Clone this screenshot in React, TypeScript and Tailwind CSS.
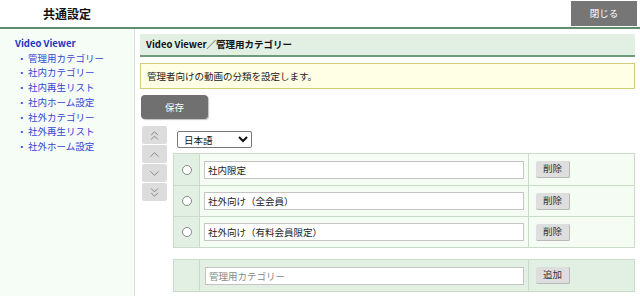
import { ChevronUp, ChevronDown, ChevronsUp, ChevronsDown } from 'lucide-react'

const navItems = [
  '管理用カテゴリー',
  '社内カテゴリー',
  '社内再生リスト',
  '社内ホーム設定',
  '社外カテゴリー',
  '社外再生リスト',
  '社外ホーム設定',
]

const categories = ['社内限定', '社外向け（全会員）', '社外向け（有料会員限定）']

function Radio() {
  return <span className="block h-[10px] w-[10px] rounded-full border border-[#8a8a8a] bg-white" />
}

function SmallButton({ label }: { label: string }) {
  return (
    <button className="h-[17px] w-[34px] rounded-[2px] border-b border-r border-[#b8b8b8] bg-[#dedede] text-[9.5px] leading-none text-[#333]">
      {label}
    </button>
  )
}

export default function App() {
  return (
    <div
      className="flex h-[296px] w-[640px] flex-col overflow-hidden bg-white text-[9.5px] text-[#222]"
      style={{ fontFamily: '"Noto Sans CJK JP", "Noto Sans", sans-serif' }}
    >
      <header className="flex h-[29px] shrink-0 items-start border-b-2 border-[#5e8e6c]">
        <div className="flex h-[27px] w-[134px] items-center justify-center text-[12px] font-bold text-[#111]">
          共通設定
        </div>
        <div className="flex-1" />
        <button className="mr-[3px] mt-[1px] h-[25px] w-[66px] bg-[#767676] text-[9.5px] text-white">
          閉じる
        </button>
      </header>

      <div className="flex min-h-0 flex-1">
        <aside className="w-[135px] shrink-0 border-r border-[#dcdcdc] bg-[#f6fdf6] pl-[15px] pt-[7px] leading-[14.7px]">
          <div className="font-bold text-[#2233c4]">Video Viewer</div>
          <ul>
            {navItems.map((item) => (
              <li key={item} className="flex text-[#3445d4]">
                <span className="w-[13px] pl-[2px]">・</span>
                <span>{item}</span>
              </li>
            ))}
          </ul>
        </aside>

        <main className="flex-1 pl-[5px] pr-[5px] pt-[5px]">
          <div className="flex h-[23px] items-center border-b-2 border-[#6e9a7c] bg-[#e1f0e2] pl-[6px] font-bold text-[#111]">
            Video Viewer／管理用カテゴリー
          </div>

          <div className="mt-[6px] flex h-[26px] items-center border border-[#cfcf7a] bg-[#ffffe6] pl-[6px]">
            管理者向けの動画の分類を設定します。
          </div>

          <button className="ml-[1px] mt-[6px] h-[24px] w-[67px] rounded-[4px] bg-[#707070] text-white shadow-[1px_1px_1px_rgba(0,0,0,0.25)]">
            保存
          </button>

          <div className="mt-[7px] flex">
            <div className="ml-[2px] flex w-[25px] flex-col gap-[1px]">
              {[ChevronsUp, ChevronUp, ChevronDown, ChevronsDown].map((Icon, i) => (
                <div
                  key={i}
                  className="flex h-[18px] items-center justify-center rounded-[2px] bg-[#dcdcdc] text-[#7a7a7a]"
                >
                  <Icon size={15} strokeWidth={1.4} />
                </div>
              ))}
            </div>

            <div className="ml-[6px] flex-1">
              <select className="ml-[4px] mt-[5px] h-[17px] w-[75px] rounded-[2px] border border-[#767676] bg-white pl-[2px] text-[9.5px] text-[#111]">
                <option>日本語</option>
              </select>

              <div className="mt-[5px] border border-[#c9dcc9]">
                {categories.map((name, i) => (
                  <div
                    key={name}
                    className={`flex h-[31px] ${i > 0 ? 'border-t border-[#c9dcc9]' : ''}`}
                  >
                    <div className="flex w-[26px] items-center justify-center border-r border-[#c9dcc9] bg-[#e1f0e2]">
                      <Radio />
                    </div>
                    <div className="flex w-[329px] items-center border-r border-[#c9dcc9] bg-[#f4fcf4] pl-[4px]">
                      <input
                        defaultValue={name}
                        className="h-[18px] w-[320px] border border-[#c4c4c4] bg-white px-[3px] text-[9.5px] text-[#222] outline-none"
                      />
                    </div>
                    <div className="flex flex-1 items-center bg-[#f4fcf4] pl-[7px]">
                      <SmallButton label="削除" />
                    </div>
                  </div>
                ))}
              </div>

              <div className="mt-[11px] flex h-[33px] border border-[#c9dcc9] bg-[#e1f0e2]">
                <div className="w-[26px] border-r border-[#c9dcc9]" />
                <div className="flex w-[329px] items-center border-r border-[#c9dcc9] pl-[5px]">
                  <input
                    placeholder="管理用カテゴリー"
                    className="h-[18px] w-[319px] border border-[#c4c4c4] bg-white px-[3px] text-[9.5px] text-[#222] outline-none placeholder:text-[#888]"
                  />
                </div>
                <div className="flex flex-1 items-center pl-[7px]">
                  <SmallButton label="追加" />
                </div>
              </div>
            </div>
          </div>
        </main>
      </div>
    </div>
  )
}
